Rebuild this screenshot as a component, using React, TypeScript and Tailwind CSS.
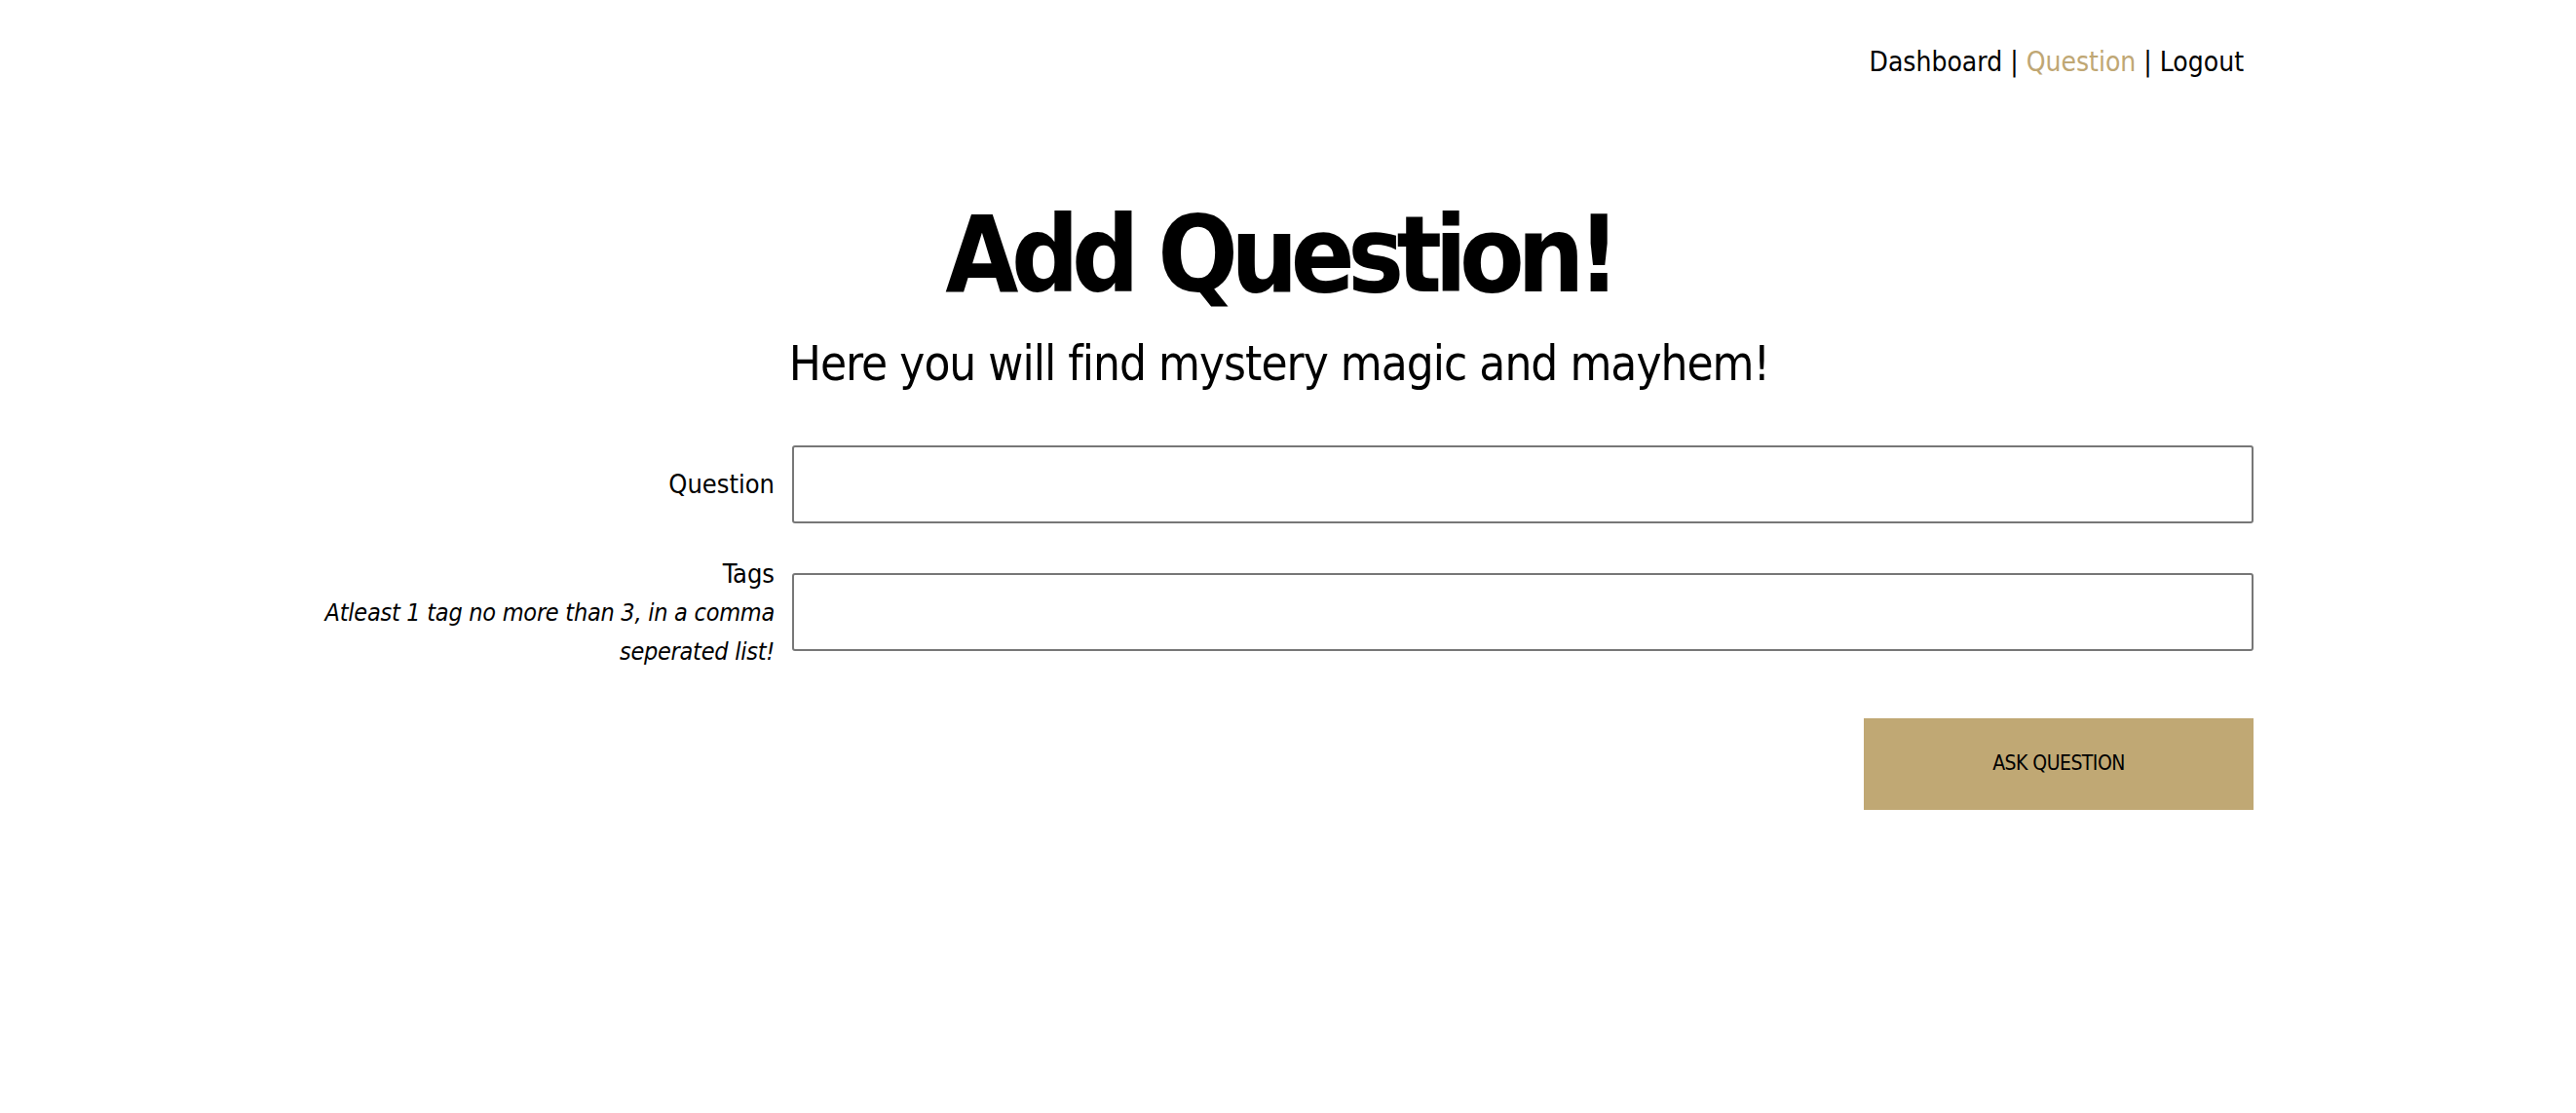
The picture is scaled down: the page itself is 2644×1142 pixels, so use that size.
const font = "font-['DejaVu_Sans_Condensed','Liberation_Sans_Narrow',Roboto,sans-serif]";

const NavBar = () => {
    return (
        <nav className="flex justify-end pr-[341px] pt-[42px] text-[28px] leading-[44px] text-black">
            <a href="#" className="text-black">Dashboard</a>
            <span className="px-[8px]">|</span>
            <a href="#" className="text-[#bfa774]">Question</a>
            <span className="px-[8px]">|</span>
            <a href="#" className="text-black">Logout</a>
        </nav>
    );
};

const App = () => {
    return (
        <div className={`min-h-[1142px] w-full bg-white text-black ${font}`}>
            <NavBar />
            <div className="ml-[313px] w-[2000px]">
                <div className="mt-[122px] text-center">
                    <h1 className="text-[108px] font-bold leading-[108px] tracking-[-0.07em]">Add Question!</h1>
                    <p className="mt-[30px] text-[49px] leading-[56px] tracking-[-0.02em]">Here you will find mystery magic and mayhem!</p>
                </div>
                <form className="mt-[55px] flex flex-col">
                    <div className="grid grid-cols-[500px_1500px] items-center">
                        <label className="pr-[18px] text-right text-[27px]">Question</label>
                        <input type="text" className="h-[80px] rounded-[3px] border-2 border-[#777777] px-3 text-[28px]" />
                    </div>
                    <div className="mt-[51px] grid grid-cols-[500px_1500px] items-start">
                        <div className="-mt-[19px] pr-[18px] text-right">
                            <div className="text-[27px] leading-[40px]">Tags</div>
                            <div className="text-[25px] italic leading-[40px] tracking-[-0.01em]">Atleast 1 tag no more than 3, in a comma seperated list!</div>
                        </div>
                        <input type="text" className="h-[80px] rounded-[3px] border-2 border-[#777777] px-3 text-[28px]" />
                    </div>
                    <div className="mt-[48px] flex justify-end">
                        <button type="button" className="h-[94px] w-[400px] bg-[#c0a874] text-[21px] uppercase tracking-tight text-black">Ask Question</button>
                    </div>
                </form>
            </div>
        </div>
    );
};

export default App;
